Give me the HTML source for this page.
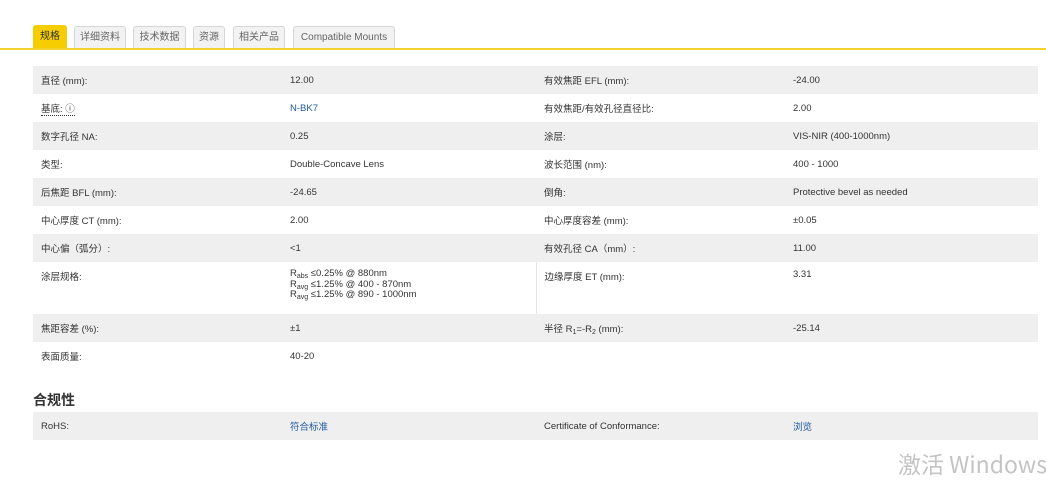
<!DOCTYPE html>
<html><head><meta charset="utf-8"><style>
*{margin:0;padding:0;box-sizing:border-box}
body{width:1046px;height:466px;overflow:hidden;background:#fff;font-family:"Liberation Sans","Noto Sans CJK SC",sans-serif;font-size:10px;color:#333;position:relative}
.tabs{position:absolute;top:25px;left:33px;height:24px}
.tab{position:absolute;top:1px;height:23px;background:#f2f2f2;border:1px solid #d6d6d6;border-bottom:none;border-radius:3px 3px 0 0;color:#666;font-size:10px;line-height:22px;text-align:center}
.tab.on{background:#f5cd00;border-color:#f5cd00;color:#333;top:0;height:24px}
.line{position:absolute;top:48px;left:0;width:1046px;height:2px;background:#f2d22e}
table{position:absolute;left:33px;width:1005px;border-collapse:collapse}
td{height:28px;padding:0 8px;vertical-align:middle;font-size:9.5px;color:#333}
tr:nth-child(odd) td{background:#efefef}
.c1{width:249px}.c2{width:254px}.c3{width:249px}
a{color:#1f5aa0;text-decoration:none}
.coat td{height:52px;vertical-align:top;padding-top:7px}
.coat .v{line-height:10.5px}
sub{font-size:7px;vertical-align:-2px;line-height:0}
h3{position:absolute;left:33px;top:390px;font-size:14px;font-weight:bold;color:#333}
.wm{position:absolute;left:898px;top:446px;font-size:23px;color:#c4c4c4;white-space:nowrap;width:200px;font-family:"Noto Sans CJK SC","Liberation Sans",sans-serif}
</style></head><body>
<div class="tabs">
<div class="tab on" style="left:0;width:34px">规格</div>
<div class="tab" style="left:41px;width:52px">详细资料</div>
<div class="tab" style="left:100px;width:53px">技术数据</div>
<div class="tab" style="left:160px;width:32px">资源</div>
<div class="tab" style="left:200px;width:52px">相关产品</div>
<div class="tab" style="left:260px;width:102px">Compatible Mounts</div>
</div>
<div class="line"></div>
<table style="top:66px">
<tr><td class="c1">直径 (mm):</td><td class="c2">12.00</td><td class="c3">有效焦距 EFL (mm):</td><td>-24.00</td></tr>
<tr><td><span style="border-bottom:1px dotted #333">基底: ⓘ</span></td><td><a>N-BK7</a></td><td>有效焦距/有效孔径直径比:</td><td>2.00</td></tr>
<tr><td>数字孔径 NA:</td><td>0.25</td><td>涂层:</td><td>VIS-NIR (400-1000nm)</td></tr>
<tr><td>类型:</td><td>Double-Concave Lens</td><td>波长范围 (nm):</td><td>400 - 1000</td></tr>
<tr><td>后焦距 BFL (mm):</td><td>-24.65</td><td>倒角:</td><td>Protective bevel as needed</td></tr>
<tr><td>中心厚度 CT (mm):</td><td>2.00</td><td>中心厚度容差 (mm):</td><td>±0.05</td></tr>
<tr><td>中心偏（弧分）:</td><td>&lt;1</td><td>有效孔径 CA（mm）:</td><td>11.00</td></tr>
<tr class="coat"><td>涂层规格:</td><td class="v">R<sub>abs</sub> ≤0.25% @ 880nm<br>R<sub>avg</sub> ≤1.25% @ 400 - 870nm<br>R<sub>avg</sub> ≤1.25% @ 890 - 1000nm</td><td style="border-left:1px solid #e4e4e4">边缘厚度 ET (mm):</td><td>3.31</td></tr>
<tr><td>焦距容差 (%):</td><td>±1</td><td>半径 R<sub>1</sub>=-R<sub>2</sub> (mm):</td><td>-25.14</td></tr>
<tr><td>表面质量:</td><td>40-20</td><td></td><td></td></tr>
</table>
<h3>合规性</h3>
<table style="top:412px">
<tr><td class="c1">RoHS:</td><td class="c2"><a>符合标准</a></td><td class="c3">Certificate of Conformance:</td><td><a>浏览</a></td></tr>
</table>
<div class="wm">激活 Windows</div>
</body></html>
